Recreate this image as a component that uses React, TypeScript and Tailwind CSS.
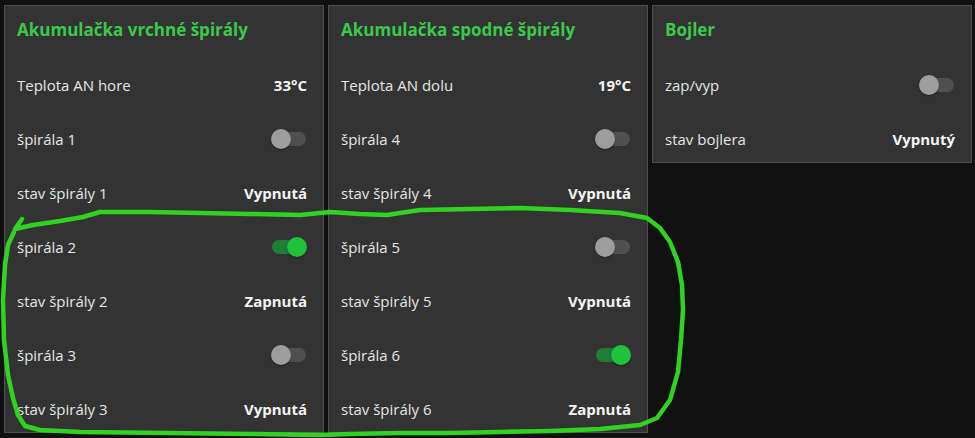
import React from "react";

type Row =
  | { kind: "value"; label: string; value: string }
  | { kind: "toggle"; label: string; on: boolean };

const Toggle = ({ on }: { on: boolean }) => (
  <div className="relative w-[36px] h-[20px]">
    <div
      className={
        "absolute left-[1px] right-[1px] top-[3px] h-[14px] rounded-full " +
        (on ? "bg-[#1f7d35]" : "bg-[#505050]")
      }
    />
    <div
      className={
        "absolute top-0 w-[20px] h-[20px] rounded-full shadow-[0_1px_2px_rgba(0,0,0,0.4)] " +
        (on ? "right-0 bg-[#1fc23a]" : "left-0 bg-[#9d9d9d]")
      }
    />
  </div>
);

const Card = ({ title, rows }: { title: string; rows: Row[] }) => (
  <div className="w-[320px] bg-[#333333] border border-[#505050] pl-[12px] pr-[16px] flex flex-col">
    <div className="h-[48px] flex items-center text-[17px] font-bold text-[#3bc94c]">{title}</div>
    <div className="mt-[8px] flex flex-col gap-[8px]">
      {rows.map((r, i) => (
        <div key={i} className="h-[46px] flex items-center justify-between">
          <span className="text-[15px] text-[#e6e6e6]">{r.label}</span>
          {r.kind === "value" ? (
            <span className="text-[15px] font-bold text-[#f4f4f4]">{r.value}</span>
          ) : (
            <Toggle on={r.on} />
          )}
        </div>
      ))}
    </div>
  </div>
);

const pts: [number, number][] = [
  [22, 219], [15, 229], [33, 225], [60, 221], [83, 217], [100, 212], [150, 212], [200, 213],
  [250, 214], [300, 215], [330, 212], [360, 214], [387, 215], [420, 210], [470, 209], [520, 208],
  [570, 210], [620, 213], [647, 218], [660, 228], [670, 242], [678, 262], [682, 285], [683, 310],
  [681, 340], [678, 372], [670, 400], [657, 418], [640, 425], [600, 429], [550, 431], [500, 432],
  [450, 433], [400, 433], [350, 434], [320, 435], [250, 434], [167, 433], [80, 432], [40, 430],
  [25, 426], [18, 415], [13, 398], [8, 375], [4, 340], [3, 300], [5, 265], [8, 245], [14, 232],
];
const d = "M " + pts.map((p) => p[0] + " " + p[1]).join(" L ");

export default function App() {
  return (
    <div
      className="relative w-[975px] h-[438px] overflow-hidden bg-[#111111]"
      style={{ fontFamily: '"Open Sans", "Noto Sans", sans-serif' }}
    >
      <div className="flex items-start gap-[4px] pl-[4px] pt-[5px]">
        <Card
          title="Akumulačka vrchné špirály"
          rows={[
            { kind: "value", label: "Teplota AN hore", value: "33°C" },
            { kind: "toggle", label: "špirála 1", on: false },
            { kind: "value", label: "stav špirály 1", value: "Vypnutá" },
            { kind: "toggle", label: "špirála 2", on: true },
            { kind: "value", label: "stav špirály 2", value: "Zapnutá" },
            { kind: "toggle", label: "špirála 3", on: false },
            { kind: "value", label: "stav špirály 3", value: "Vypnutá" },
          ]}
        />
        <Card
          title="Akumulačka spodné špirály"
          rows={[
            { kind: "value", label: "Teplota AN dolu", value: "19°C" },
            { kind: "toggle", label: "špirála 4", on: false },
            { kind: "value", label: "stav špirály 4", value: "Vypnutá" },
            { kind: "toggle", label: "špirála 5", on: false },
            { kind: "value", label: "stav špirály 5", value: "Vypnutá" },
            { kind: "toggle", label: "špirála 6", on: true },
            { kind: "value", label: "stav špirály 6", value: "Zapnutá" },
          ]}
        />
        <Card
          title="Bojler"
          rows={[
            { kind: "toggle", label: "zap/vyp", on: false },
            { kind: "value", label: "stav bojlera", value: "Vypnutý" },
          ]}
        />
      </div>
      <svg className="absolute inset-0 pointer-events-none" width="975" height="438" viewBox="0 0 975 438">
        <path d={d} fill="none" stroke="#30d420" strokeWidth="4.5" strokeLinejoin="round" strokeLinecap="round" />
      </svg>
    </div>
  );
}
